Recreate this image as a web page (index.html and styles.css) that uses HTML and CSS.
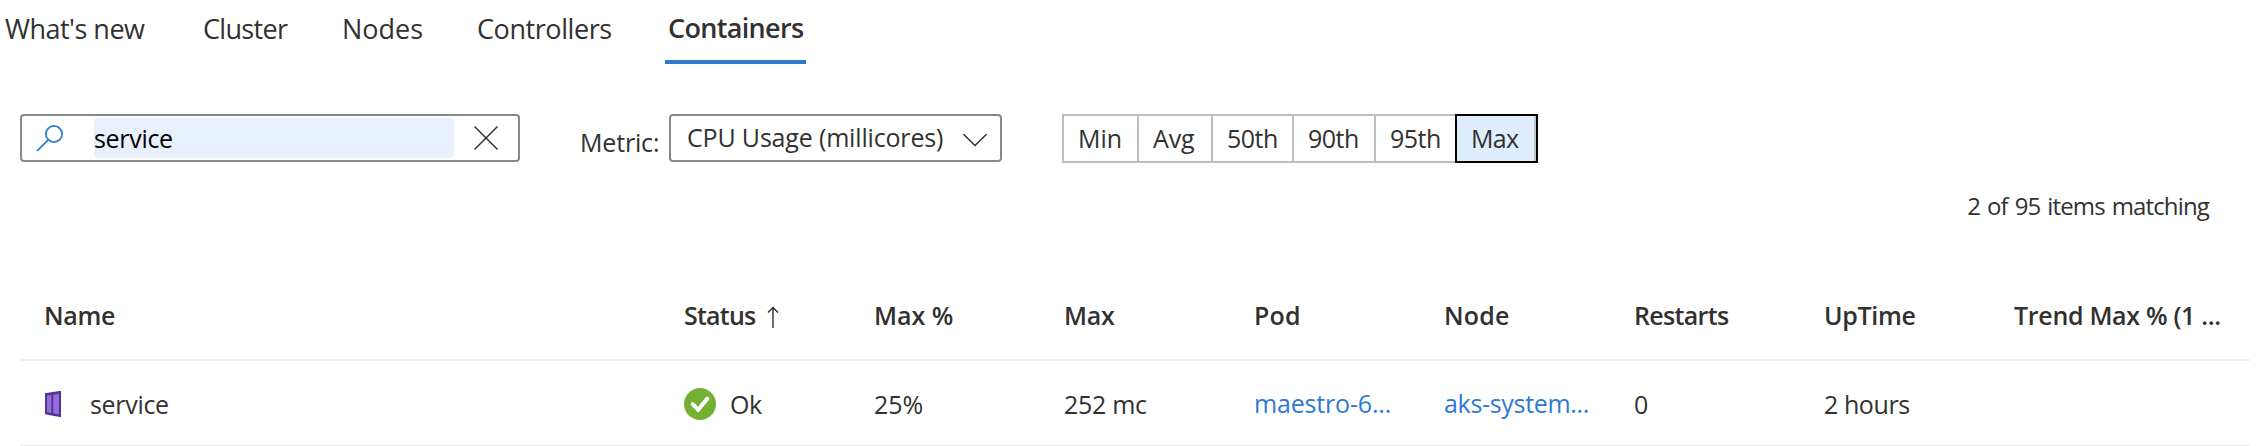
FILE: index.html
```html
<!DOCTYPE html>
<html lang="en">
<head>
<meta charset="utf-8">
<title>Containers</title>
<link rel="stylesheet" href="styles.css">
</head>
<body>
<nav class="tabs">
  <a class="tab t5">What's new</a>
  <a class="tab t7">Cluster</a>
  <a class="tab">Nodes</a>
  <a class="tab t4">Controllers</a>
  <a class="tab active t7">Containers</a>
</nav>

<div class="toolbar">
  <div class="search">
    <svg class="search-icon" width="28" height="28" viewBox="0 0 28 28" fill="none" stroke="#2f7ad1" stroke-width="1.8"><circle cx="18" cy="10" r="8.1"/><path d="M12.2 15.8 1.2 26.8"/></svg>
    <div class="search-value t3">service</div>
    <svg class="clear-icon" width="26" height="26" viewBox="0 0 26 26" fill="none" stroke="#323130" stroke-width="1.5"><path d="M1.5 1.5 24.5 24.5M24.5 1.5 1.5 24.5"/></svg>
  </div>
  <label class="metric-label t2">Metric:</label>
  <div class="select">
    <span class="t2">CPU Usage (millicores)</span>
    <svg class="chevron" width="26" height="14" viewBox="0 0 26 14" fill="none" stroke="#323130" stroke-width="1.5"><path d="M1.5 1.2 13 12.5 24.5 1.2"/></svg>
  </div>
  <div class="segments">
    <div class="seg">Min</div>
    <div class="seg t2">Avg</div>
    <div class="seg t5">50th</div>
    <div class="seg t5">90th</div>
    <div class="seg t5">95th</div>
    <div class="seg selected t7">Max</div>
  </div>
</div>

<div class="count">2 of 95 items matching</div>

<div class="table">
  <div class="row head">
    <div class="t3">Name</div>
    <div class="sorted"><span class="t8">Status</span><svg class="sort" width="14" height="22" viewBox="0 0 14 22" fill="none" stroke="#323130" stroke-width="1.4"><path d="M7 22V1.6M2 6.6 7 1.4 12 6.6"/></svg></div>
    <div>Max %</div>
    <div class="t3">Max</div>
    <div class="w2">Pod</div>
    <div class="w2">Node</div>
    <div class="t7">Restarts</div>
    <div class="t3">UpTime</div>
    <div class="t3 trend">Trend Max % (1 ...</div>
  </div>
  <div class="row">
    <div class="name"><svg width="16" height="28" viewBox="0 0 16 28"><path d="M0 3.2 16 .8V27.2L0 24.2Z" fill="#52359b"/><path d="M2 5.6 6.3 5V22.9L2 22.2ZM8.2 4.7 14 3.9V24.2L8.2 23.2Z" fill="#986cd8"/></svg><span class="t3">service</span></div>
    <div class="status"><svg width="32" height="32" viewBox="0 0 32 32"><circle cx="16" cy="16" r="16" fill="#74b033"/><path d="M8.7 16.2 14.1 21.7 23.3 10.6" fill="none" stroke="#fff" stroke-width="4" stroke-linecap="round"/></svg><span class="t5">Ok</span></div>
    <div>25%</div>
    <div class="t3">252 mc</div>
    <div><a class="link t2">maestro-6...</a></div>
    <div><a class="link t3">aks-system...</a></div>
    <div>0</div>
    <div class="t4">2 hours</div>
    <div></div>
  </div>
</div>
</body>
</html>
```

FILE: styles.css
```css
* { box-sizing: border-box; }
body {
  margin: 0;
  height: 446px;
  overflow: hidden;
  background: #fff;
  color: #323130;
  font: 25px "Open Sans", "Noto Sans", sans-serif;
  white-space: nowrap;
}
svg { display: block; flex: none; }

/* Letter-spacing steps */
.t2 { letter-spacing: -0.17px; }
.t3 { letter-spacing: -0.31px; }
.t4 { letter-spacing: -0.42px; }
.t5 { letter-spacing: -0.51px; }
.t7 { letter-spacing: -0.67px; }
.t8 { letter-spacing: -0.78px; }
.w2 { letter-spacing: 0.2px; }

.tabs {
  display: grid;
  grid-template-columns: 198px 139px 135px 188px 141px;
  height: 64px;
  padding-left: 5px;
  font-size: 27px;
}
.tab { line-height: 57px; }
.tab.active {
  padding-left: 3px;
  border-bottom: 4px solid #2f7ad1;
  font-weight: 600;
  line-height: 55px;
}

.toolbar {
  display: flex;
  height: 48px;
  margin: 50px 0 0 20px;
}
.search {
  display: flex;
  align-items: center;
  width: 500px;
  border: 2px solid #888;
  border-radius: 4px;
}
.search-icon { margin-left: 14px; }
.search-value {
  width: 360px;
  height: 40px;
  margin: 0 19px 0 30px;
  border-radius: 4px;
  background: #e8effd;
  color: #000;
  line-height: 40px;
}
.metric-label { width: 149px; padding-left: 60px; line-height: 57px; }
.select {
  display: flex;
  width: 333px;
  padding-left: 16px;
  border: 2px solid #888;
  border-radius: 4px;
  line-height: 42px;
}
.chevron { margin: 17px 12px 0 auto; }
.segments {
  display: grid;
  grid-template-columns: 75px 74px 81px 82px 81px 83px;
  margin-left: 60px;
}
.seg {
  padding-left: 14px;
  border: 2px solid #bebebe;
  border-right: 0;
  line-height: 45px;
}
.seg.selected {
  border: 2px solid #000;
  background: #deeeff;
  box-shadow: inset -2px 0 #c0c4c8;
}

.count {
  margin: 29px 57px 0 0;
  font-size: 24px;
  letter-spacing: -0.85px;
  word-spacing: 1.5px;
  line-height: 30px;
  text-align: right;
}

.table { width: 2230px; margin: 50px 0 0 20px; }
.row {
  display: grid;
  grid-template-columns: 640px repeat(7, 190px) auto;
  height: 86px;
  padding-left: 24px;
  border-bottom: 2px solid #ebebeb;
  line-height: 86px;
}
.head { height: 90px; border-color: #f1f1f1; font-weight: 600; line-height: 88px; }
.sorted, .name, .status { display: flex; }
.sort { margin: 35px 0 0 11px; }
.name svg { margin: 29px 29px 0 1px; }
.status svg { margin: 27px 14px 0 0; }
.link { display: block; color: #2f7ad1; line-height: 84px; }
```
